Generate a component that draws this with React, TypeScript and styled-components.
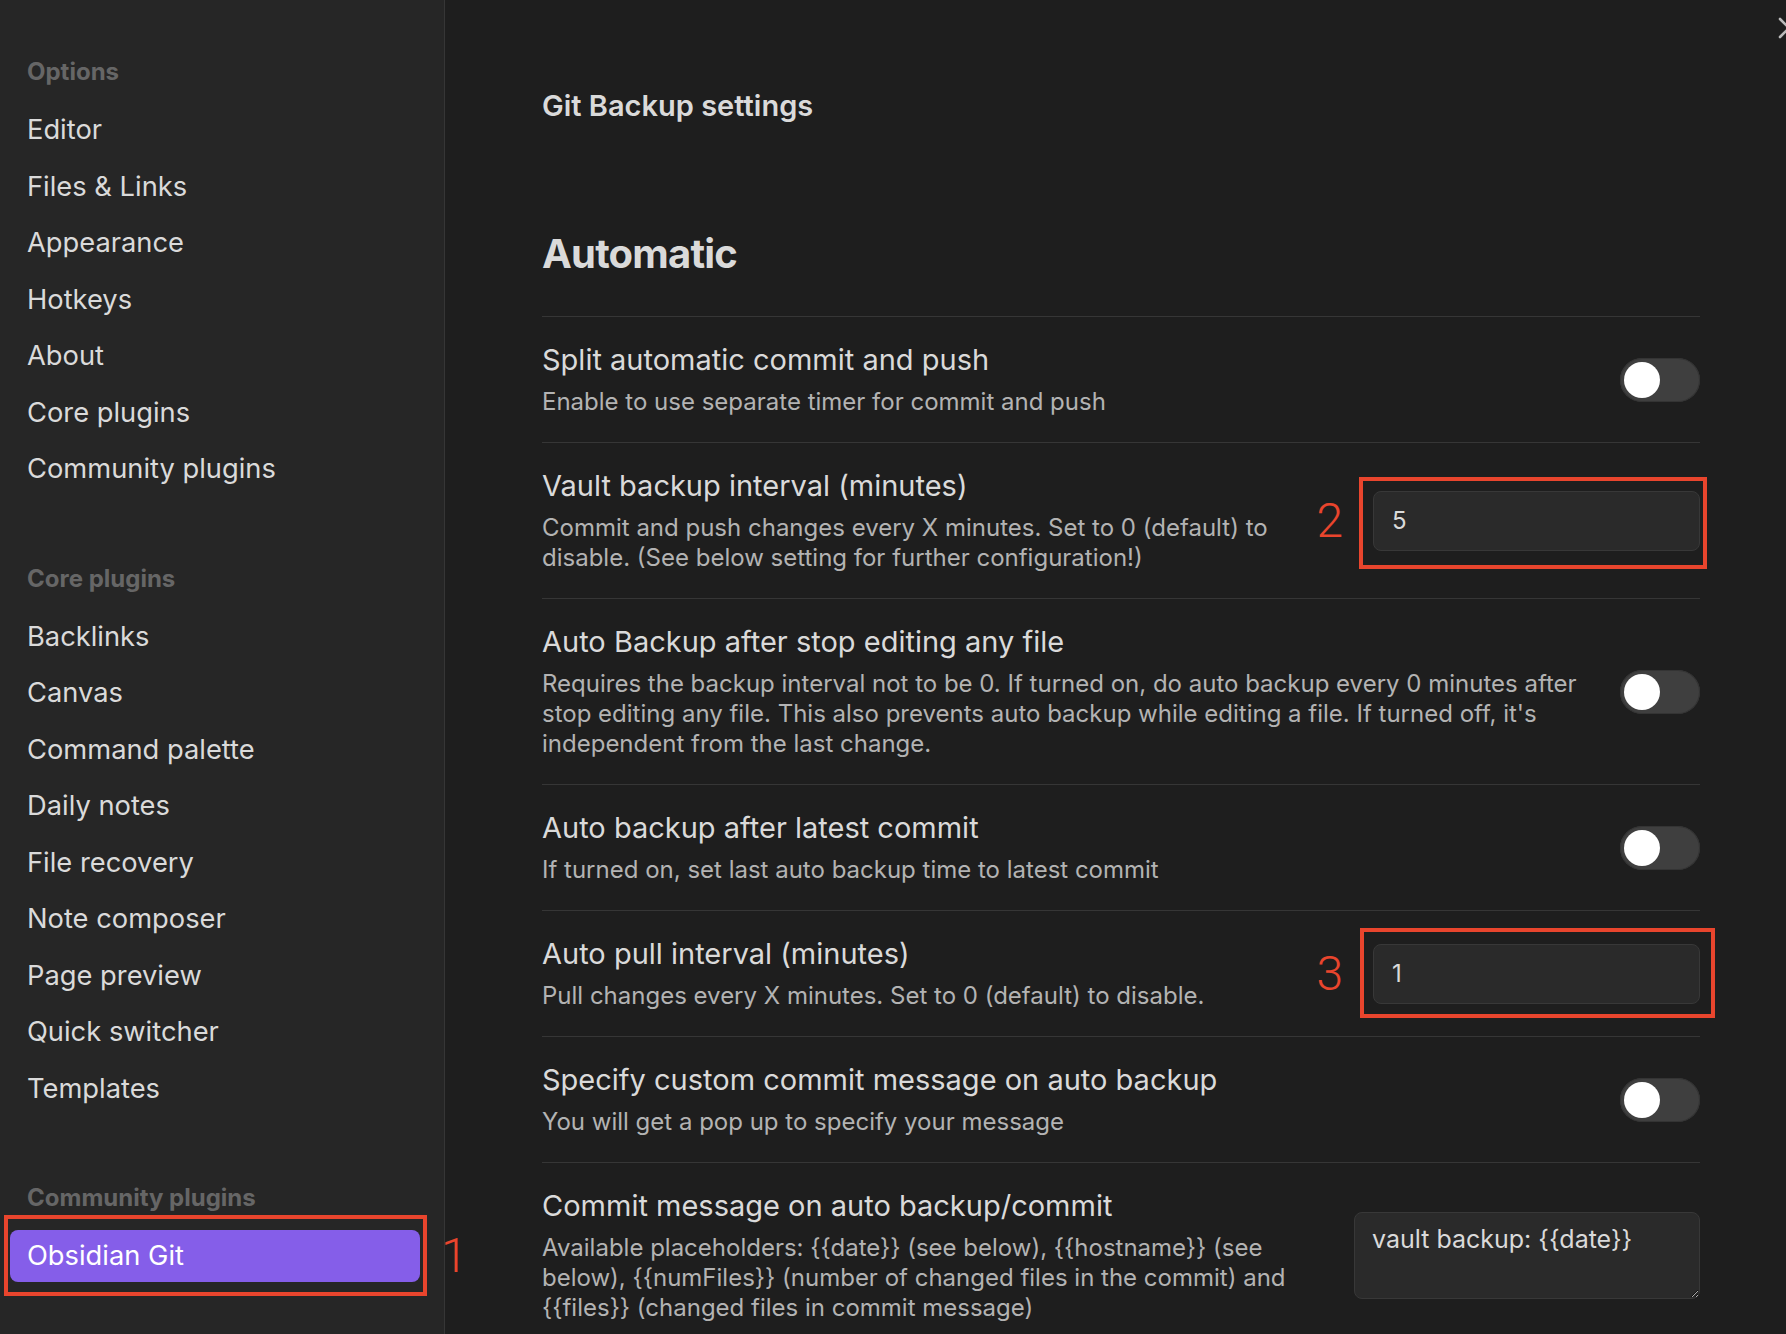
import React from 'react';
import styled, { createGlobalStyle } from 'styled-components';

const GlobalStyle = createGlobalStyle`
  html, body { margin: 0; padding: 0; background: #1e1e1e; }
  body { font-family: Inter, "Noto Sans", sans-serif; overflow: hidden; -webkit-font-smoothing: antialiased; }
  #root { width: 1786px; height: 1334px; }
`;

const Shell = styled.div`
  position: relative;
  display: flex;
  width: 1786px;
  height: 1334px;
  overflow: hidden;
  background: #1e1e1e;
`;

const Sidebar = styled.nav`
  width: 445px;
  flex-shrink: 0;
  box-sizing: border-box;
  background: #262626;
  border-right: 1px solid #363636;
  padding: 54px 24px 0 10px;
  display: flex;
  flex-direction: column;
  gap: 65.5px;
  position: relative;
  z-index: 2;
`;

const NavGroup = styled.div`
  display: flex;
  flex-direction: column;
`;

const NavHeader = styled.div`
  height: 36px;
  line-height: 36px;
  padding-left: 17px;
  font-size: 24px;
  font-weight: 700;
  color: #666666;
  margin-bottom: 14px;
`;

const NavList = styled.div`
  display: flex;
  flex-direction: column;
  gap: 4.5px;
`;

const NavItem = styled.div<{ $active?: boolean }>`
  position: relative;
  height: 52px;
  line-height: 52px;
  padding-left: 17px;
  border-radius: 8px;
  font-size: 27.3px;
  color: ${(p) => (p.$active ? '#ffffff' : '#dadada')};
  background: ${(p) => (p.$active ? '#855ee9' : 'transparent')};
  white-space: nowrap;
`;

const Highlight = styled.div<{ $t: number; $r: number; $b: number; $l: number }>`
  position: absolute;
  top: ${(p) => -p.$t}px;
  right: ${(p) => -p.$r}px;
  bottom: ${(p) => -p.$b}px;
  left: ${(p) => -p.$l}px;
  border: 4px solid #e9452d;
  pointer-events: none;
`;

const Marker = styled.span<{ $gap: number; $side: 'left' | 'right' }>`
  position: absolute;
  top: 50%;
  transform: translateY(-50%);
  ${(p) => (p.$side === 'left' ? `right: calc(100% + ${p.$gap}px);` : `left: calc(100% + ${p.$gap}px);`)}
  font-family: Roboto, "Liberation Sans", sans-serif;
  font-weight: 300;
  font-size: 48px;
  line-height: 1;
  color: #e9452d;
`;

const Main = styled.main`
  flex: 1;
  box-sizing: border-box;
  padding: 88px 86px 0 97px;
  min-width: 0;
`;

const PageTitle = styled.div`
  font-size: 29px;
  font-weight: 600;
  line-height: 36px;
  color: #dadada;
`;

const SectionHeading = styled.div`
  margin-top: 105px;
  margin-bottom: 37px;
  font-size: 40px;
  font-weight: 700;
  line-height: 50px;
  color: #dadada;
  letter-spacing: -0.8px;
`;

const SettingItem = styled.div`
  display: flex;
  align-items: center;
  border-top: 1px solid #363636;
  padding: 25px 0;
`;

const Info = styled.div`
  flex: 1 1 auto;
  min-width: 0;
  margin-right: 30px;
`;

const Name = styled.div`
  font-size: 29px;
  line-height: 36px;
  color: #dadada;
`;

const Desc = styled.div`
  margin-top: 9px;
  font-size: 24px;
  line-height: 30px;
  color: #b3b3b3;
`;

const Control = styled.div`
  flex-shrink: 0;
  display: flex;
  justify-content: flex-end;
  align-items: center;
`;

const Anchor = styled.div`
  position: relative;
  display: flex;
`;

const TextInput = styled.input`
  width: 327px;
  height: 60px;
  box-sizing: border-box;
  background: #2a2a2a;
  border: 1px solid #383838;
  border-radius: 8px;
  padding: 0 18px;
  font-family: Inter, "Noto Sans", sans-serif;
  font-size: 24px;
  color: #dadada;
  outline: none;
`;

const TextArea = styled.textarea`
  width: 346px;
  height: 87px;
  box-sizing: border-box;
  background: #2a2a2a;
  border: 1px solid #383838;
  border-radius: 8px;
  padding: 10px 17px;
  font-family: Inter, "Noto Sans", sans-serif;
  font-size: 25px;
  line-height: 32px;
  color: #dadada;
  outline: none;
  resize: both;
  color-scheme: dark;
`;

const Toggle = styled.div`
  position: relative;
  width: 80px;
  height: 44px;
  border-radius: 22px;
  background: #3f3f3f;
  box-shadow: inset 0 0 0 1px #343434;
`;

const Knob = styled.div`
  position: absolute;
  top: 4px;
  left: 4px;
  width: 36px;
  height: 36px;
  border-radius: 50%;
  background: #ffffff;
`;

const CloseButton = styled.div`
  position: absolute;
  top: 17px;
  right: -14px;
  width: 22px;
  height: 22px;
  color: #bababa;
`;

type Setting = {
  name: string;
  desc: string;
  kind: 'toggle' | 'input' | 'textarea';
  value?: string;
  mark?: { n: string; t: number; r: number; b: number; l: number; gap: number };
};

const settings: Setting[] = [
  { name: 'Split automatic commit and push', desc: 'Enable to use separate timer for commit and push', kind: 'toggle' },
  {
    name: 'Vault backup interval (minutes)',
    desc: 'Commit and push changes every X minutes. Set to 0 (default) to disable. (See below setting for further configuration!)',
    kind: 'input',
    value: '5',
    mark: { n: '2', t: 14, r: 7, b: 18, l: 14, gap: 30 },
  },
  {
    name: 'Auto Backup after stop editing any file',
    desc: "Requires the backup interval not to be 0. If turned on, do auto backup every 0 minutes after stop editing any file. This also prevents auto backup while editing a file. If turned off, it's independent from the last change.",
    kind: 'toggle',
  },
  { name: 'Auto backup after latest commit', desc: 'If turned on, set last auto backup time to latest commit', kind: 'toggle' },
  {
    name: 'Auto pull interval (minutes)',
    desc: 'Pull changes every X minutes. Set to 0 (default) to disable.',
    kind: 'input',
    value: '1',
    mark: { n: '3', t: 16, r: 15, b: 14, l: 13, gap: 30 },
  },
  { name: 'Specify custom commit message on auto backup', desc: 'You will get a pop up to specify your message', kind: 'toggle' },
  {
    name: 'Commit message on auto backup/commit',
    desc: 'Available placeholders: {{date}} (see below), {{hostname}} (see below), {{numFiles}} (number of changed files in the commit) and {{files}} (changed files in commit message)',
    kind: 'textarea',
    value: 'vault backup: {{date}}',
  },
];

const optionItems = ['Editor', 'Files & Links', 'Appearance', 'Hotkeys', 'About', 'Core plugins', 'Community plugins'];
const coreItems = ['Backlinks', 'Canvas', 'Command palette', 'Daily notes', 'File recovery', 'Note composer', 'Page preview', 'Quick switcher', 'Templates'];

function renderControl(s: Setting) {
  if (s.kind === 'toggle') {
    return (
      <Toggle>
        <Knob />
      </Toggle>
    );
  }
  if (s.kind === 'textarea') {
    return <TextArea defaultValue={s.value} spellCheck={false} />;
  }
  return (
    <Anchor>
      <TextInput type="text" defaultValue={s.value} />
      {s.mark && (
        <>
          <Highlight $t={s.mark.t} $r={s.mark.r} $b={s.mark.b} $l={s.mark.l} />
          <Marker $side="left" $gap={s.mark.gap}>{s.mark.n}</Marker>
        </>
      )}
    </Anchor>
  );
}

export default function App() {
  return (
    <>
      <GlobalStyle />
      <Shell>
        <Sidebar>
          <NavGroup>
            <NavHeader>Options</NavHeader>
            <NavList>
              {optionItems.map((i) => (
                <NavItem key={i}>{i}</NavItem>
              ))}
            </NavList>
          </NavGroup>
          <NavGroup>
            <NavHeader>Core plugins</NavHeader>
            <NavList>
              {coreItems.map((i) => (
                <NavItem key={i}>{i}</NavItem>
              ))}
            </NavList>
          </NavGroup>
          <NavGroup>
            <NavHeader>Community plugins</NavHeader>
            <NavList>
              <NavItem $active>
                Obsidian Git
                <Highlight $t={15} $r={7} $b={14} $l={6} />
                <Marker $side="right" $gap={21}>1</Marker>
              </NavItem>
            </NavList>
          </NavGroup>
        </Sidebar>
        <Main>
          <PageTitle>Git Backup settings</PageTitle>
          <SectionHeading>Automatic</SectionHeading>
          {settings.map((s) => (
            <SettingItem key={s.name}>
              <Info>
                <Name>{s.name}</Name>
                <Desc>{s.desc}</Desc>
              </Info>
              <Control>{renderControl(s)}</Control>
            </SettingItem>
          ))}
        </Main>
        <CloseButton>
          <svg width="22" height="22" viewBox="0 0 22 22" fill="none" stroke="currentColor" strokeWidth="2.6" strokeLinecap="round">
            <path d="M2 2L20 20M20 2L2 20" />
          </svg>
        </CloseButton>
      </Shell>
    </>
  );
}
